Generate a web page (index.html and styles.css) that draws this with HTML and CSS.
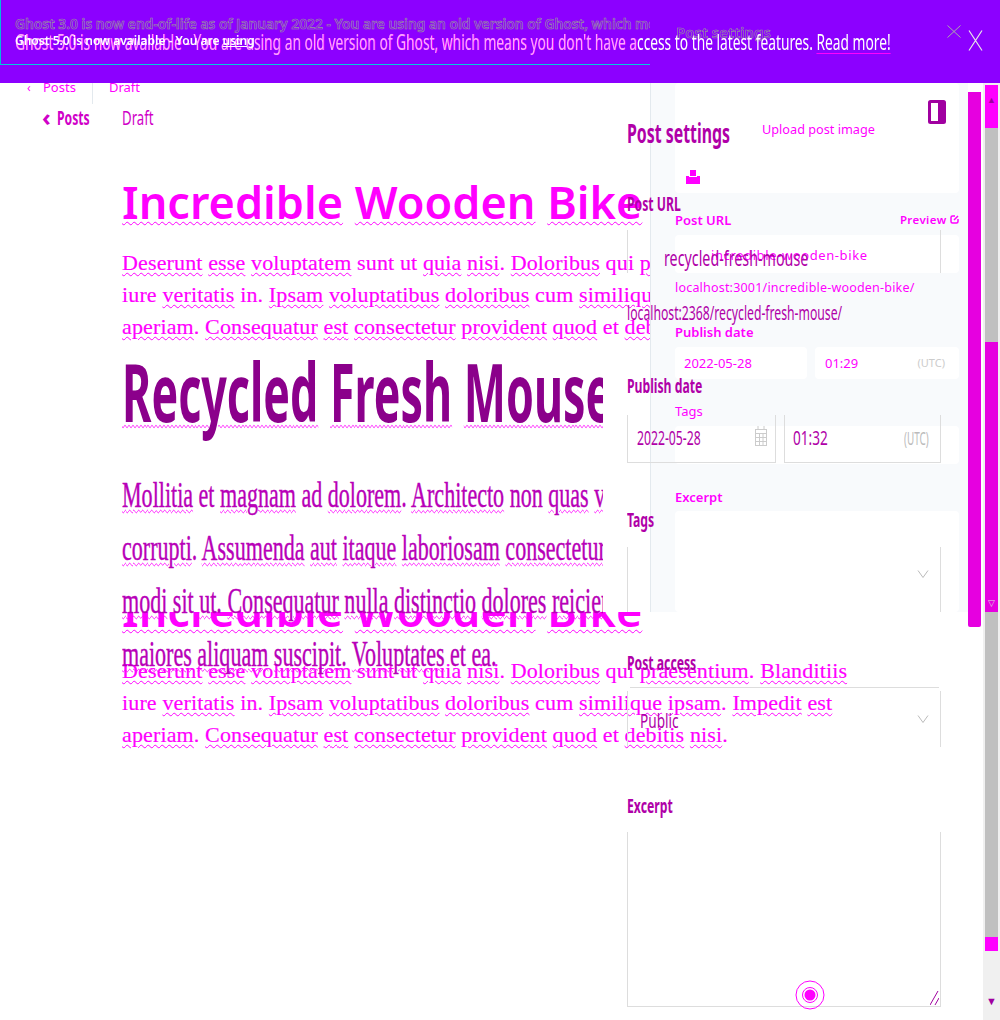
FILE: index.html
```html
<!DOCTYPE html>
<html lang="en">
<head>
<meta charset="utf-8">
<title>Post settings</title>
<link rel="stylesheet" href="styles.css">
</head>
<body>
<div class="canvas">

<!-- older page, sits under everything -->
<div class="old-article top-copy">
  <h1 class="old-title"><span class="sp">Incredible</span> <span class="sp">Wooden</span> <span class="sp">Bike</span></h1>
  <p class="old-line"><span class="sp">Deserunt</span> <span class="sp">esse</span> <span class="sp">voluptatem</span> sunt ut <span class="sp">quia</span> <span class="sp">nisi</span>. <span class="sp">Doloribus</span> qui <span class="sp">praesentium</span>. <span class="sp">Blanditiis</span></p>
  <p class="old-line">iure <span class="sp">veritatis</span> in. <span class="sp">Ipsam</span> <span class="sp">voluptatibus</span> <span class="sp">doloribus</span> cum <span class="sp">similique</span> <span class="sp">ipsam</span>. <span class="sp">Impedit</span> <span class="sp">est</span></p>
  <p class="old-line"><span class="sp">aperiam</span>. <span class="sp">Consequatur</span> <span class="sp">est</span> <span class="sp">consectetur</span> <span class="sp">provident</span> <span class="sp">quod</span> et <span class="sp">debitis</span> <span class="sp">nisi</span>.</p>
</div>

<div class="old-top">
  <span class="old-back">&#8249;</span><span class="old-crumb">Posts</span><span class="old-sep"></span><span class="old-crumb">Draft</span>
</div>

<aside class="old-panel">
  <div class="old-image">
    <span class="old-upload">Upload post image</span>
    <svg class="old-upload-icon" width="14" height="14" viewBox="0 0 14 14"><path d="M4 0h6v6h4v8H0V6h4z" fill="#f0f"/><path d="M3 6h8v1H3z" fill="#fff"/></svg>
  </div>
  <div class="old-labelrow"><span class="old-label">Post URL</span><span class="old-preview">Preview <svg width="9" height="9" viewBox="0 0 9 9" fill="none" stroke="#f0f" stroke-width="1.5"><path d="M5 1H2.5A1.5 1.5 0 0 0 1 2.5v4A1.5 1.5 0 0 0 2.5 8h4A1.5 1.5 0 0 0 8 6.5V4M4 5l4-4"/></svg></span></div>
  <div class="old-input url-input">incredible-wooden-bike</div>
  <div class="old-hint">localhost:3001/incredible-wooden-bike/</div>
  <div class="old-label date-label">Publish date</div>
  <div class="old-dates">
    <div class="old-input date-box">2022-05-28</div>
    <div class="old-input time-box">01:29<span class="old-utc">(UTC)</span></div>
  </div>
  <div class="old-label tags-label">Tags</div>
  <div class="old-input tags-box"></div>
  <div class="old-label excerpt-label">Excerpt</div>
  <div class="old-input excerpt-box"></div>
</aside>

<div class="old-article low-copy">
  <h1 class="old-title"><span class="sp">Incredible</span> <span class="sp">Wooden</span> <span class="sp">Bike</span></h1>
  <p class="old-line"><span class="sp">Deserunt</span> <span class="sp">esse</span> <span class="sp">voluptatem</span> sunt ut <span class="sp">quia</span> <span class="sp">nisi</span>. <span class="sp">Doloribus</span> qui <span class="sp">praesentium</span>. <span class="sp">Blanditiis</span></p>
  <p class="old-line">iure <span class="sp">veritatis</span> in. <span class="sp">Ipsam</span> <span class="sp">voluptatibus</span> <span class="sp">doloribus</span> cum <span class="sp">similique</span> <span class="sp">ipsam</span>. <span class="sp">Impedit</span> <span class="sp">est</span></p>
  <p class="old-line"><span class="sp">aperiam</span>. <span class="sp">Consequatur</span> <span class="sp">est</span> <span class="sp">consectetur</span> <span class="sp">provident</span> <span class="sp">quod</span> et <span class="sp">debitis</span> <span class="sp">nisi</span>.</p>
</div>

<!-- newer page -->
<div class="new-top">
  <span class="new-back">&#8249;</span><span class="narrow bold">Posts</span><span class="narrow draft">Draft</span>
</div>

<div class="new-article">
  <h1 class="new-title"><span class="sp">Recycled</span> <span class="sp">Fresh</span> <span class="sp">Mouse</span></h1>
  <p class="new-line"><span class="sp">Mollitia</span> et <span class="sp">magnam</span> ad <span class="sp">dolorem</span>. <span class="sp">Architecto</span> non <span class="sp">quas</span> <span class="sp">voluptatem</span></p>
  <p class="new-line"><span class="sp">corrupti</span>. <span class="sp">Assumenda</span> <span class="sp">aut</span> <span class="sp">itaque</span> <span class="sp">laboriosam</span> <span class="sp">consectetur</span></p>
  <p class="new-line"><span class="sp">modi</span> sit <span class="sp">ut</span>. <span class="sp">Consequatur</span> <span class="sp">nulla</span> <span class="sp">distinctio</span> <span class="sp">dolores</span> <span class="sp">reiciendis</span></p>
  <p class="new-line"><span class="sp">maiores</span> <span class="sp">aliquam</span> <span class="sp">suscipit</span>. <span class="sp">Voluptates</span> et ea.</p>
</div>

<aside class="new-panel">
  <div class="new-heading"><span class="narrow bold">Post settings</span></div>
  <div class="new-label url-l"><span class="narrow bold">Post URL</span></div>
  <div class="new-input url-f"><span class="narrow looser">recycled-fresh-mouse</span></div>
  <div class="new-hint"><span class="narrow">localhost:2368/recycled-fresh-mouse/</span></div>
  <div class="new-label date-l"><span class="narrow bold">Publish date</span></div>
  <div class="new-dates">
    <div class="new-input date-f">
      <span class="narrow">2022-05-28</span>
      <svg width="14" height="20" viewBox="0 0 14 20" fill="none" stroke="#ccc"><path d="M1 3.5h12M1 7.5h12M1 11.5h12M1 15.5h12M1 19.5h12M1.5 3v17M5.5 7v13M9 7v13M12.5 3v17M4 0v3M10 0v3"/></svg>
    </div>
    <div class="new-input time-f">
      <span class="narrow looser">01:32</span><span class="narrow utc">(UTC)</span>
    </div>
  </div>
  <div class="new-label tags-l"><span class="narrow bold">Tags</span></div>
  <div class="new-input tags-f"><svg class="chev" width="12" height="8" viewBox="0 0 12 8" fill="none" stroke="#bbb"><path d="M1 .5l5 7 5-7"/></svg></div>
  <div class="new-label access-l"><span class="narrow bold">Post access</span></div>
  <div class="new-input access-f"><span class="narrow looser">Public</span><svg class="chev" width="12" height="8" viewBox="0 0 12 8" fill="none" stroke="#bbb"><path d="M1 .5l5 7 5-7"/></svg></div>
  <div class="new-label excerpt-l"><span class="narrow bold">Excerpt</span></div>
  <div class="new-input excerpt-f">
    <svg class="grip" width="9" height="14" viewBox="0 0 9 14" stroke="#a000a0" fill="none"><path d="M0 14L8 0M5 14l4-7"/></svg>
  </div>
</aside>

<svg class="target" width="30" height="30" viewBox="0 0 30 30" fill="none"><circle cx="15" cy="15" r="14" stroke="#f0f"/><circle cx="15" cy="15" r="7.5" stroke="#f0f"/><circle cx="15" cy="15" r="5.5" fill="#f0f"/></svg>

<svg class="toggle" width="18" height="24" viewBox="0 0 18 24"><rect x="1.5" y="1.5" width="15" height="21" rx="1" fill="#fff" stroke="#a000a0" stroke-width="3"/><rect x="10" y="1" width="7" height="22" fill="#a000a0"/></svg>

<header class="banner">
  <div class="old-bar">
    <span class="old-notice">Ghost 3.0 is now end-of-life as of January 2022 - You are using an old version of Ghost, which means you don't have access</span>
    <span class="old-settings">Post settings</span>
  </div>
  <div class="new-bar">
    <span class="fringe">Ghost 5.0 is now available - You are using an old version of Ghost, which means you don't have a</span><span>ccess to the latest features. </span><a class="more">Read more!</a>
  </div>
  <div class="small-notice">Ghost 5.0 is now available - You are <u>using</u></div>
  <svg class="old-x" width="14" height="13" viewBox="0 0 14 13" fill="none" stroke="#aaa"><path d="M.5.5l13 12M13.5.5l-13 12"/></svg>
  <svg class="new-x" width="15" height="21" viewBox="0 0 15 21" fill="none" stroke="#e8e8e8" stroke-width="1.2"><path d="M1 .5l13 20M14 .5L1 20.5"/></svg>
</header>

<div class="inner-bar"></div>
<div class="page-bar">
  <div class="pb-up">&#9650;</div>
  <div class="pb-grey one"></div>
  <div class="pb-fill"><span>&#9661;</span></div>
  <div class="pb-grey two"></div>
  <div class="pb-tick"></div>
  <div class="pb-down">&#9660;</div>
</div>

</div>
</body>
</html>
```

FILE: styles.css
```css
html, body { margin: 0; padding: 0; background: #fff; }
.canvas { position: relative; width: 1000px; height: 1020px; overflow: hidden; font-family: "Noto Sans", sans-serif; color: #f0f; }

.sp { text-decoration: underline wavy #f0f 1px; text-underline-offset: 2px; }

/* narrow text, the new page's font is much tighter than anything installed */
.narrow { display: inline-block; transform: scaleX(.61); transform-origin: left center; white-space: nowrap; }
.narrow.looser { transform: scaleX(.68); }
.bold { font-weight: 700; }

/* banner */
.banner { position: absolute; left: 0; top: 0; width: 1000px; height: 83px; background: #8c00ff; color: #fff; overflow: hidden; }
.old-bar { position: absolute; left: 0; top: 0; width: 650px; height: 65px; border-left: 1px solid #0bd; border-bottom: 1px solid #0cd; box-sizing: border-box; overflow: hidden; white-space: nowrap; }
.old-notice { position: absolute; left: 14px; top: 14px; font-size: 13.8px; font-weight: 600; color: #8c00ff; -webkit-text-stroke: .6px #999; }
.old-settings { position: fixed; left: 676px; top: 22px; font-size: 15px; font-weight: 600; color: #8c00ff; -webkit-text-stroke: .6px #999; }
.new-bar { position: absolute; left: 15px; top: 27px; font-size: 22px; line-height: 28px; white-space: nowrap; transform: scaleX(.626); transform-origin: left center; }
.fringe { color: #f6a8ff; text-shadow: 1px 0 #f0f; }
.more { text-decoration: underline #f0f 1px; text-underline-offset: 3px; color: #fff; }
.small-notice { position: absolute; left: 15px; top: 33px; font-size: 12px; font-weight: 600; line-height: 16px; color: #fff; white-space: nowrap; }
.old-x { position: absolute; left: 947px; top: 25px; }
.new-x { position: absolute; left: 968px; top: 30px; }

/* older page */
.old-article { position: absolute; left: 122px; overflow: hidden; white-space: nowrap; }
.top-copy { top: 171px; width: 528px; }
.low-copy { top: 579px; width: 760px; clip-path: inset(33px 0 0 0); }
.old-title { margin: 0 0 14px; font-size: 45px; line-height: 62px; font-weight: 600; }
.old-line { margin: 0; font-family: "Liberation Serif", serif; font-size: 22px; line-height: 32px; letter-spacing: .14px; -webkit-text-stroke: .2px #f0f; }

.old-top { position: absolute; left: 27px; top: 72px; height: 30px; display: flex; align-items: center; font-size: 13px; }
.old-back { width: 16px; font-size: 12px; }
.old-sep { width: 1px; height: 34px; background: #e3e9ee; margin: 0 16px; }

.old-panel { position: absolute; left: 650px; top: 83px; width: 318px; height: 529px; box-sizing: border-box; padding-left: 24px; padding-right: 9px; background: #f8fafc; border-left: 1px solid #e3e9ee; overflow: hidden; font-size: 13px; }
.old-image { position: relative; height: 110px; background: #fff; border-radius: 4px; }
.old-upload { position: absolute; left: 87px; top: 37px; font-size: 12.7px; }
.old-upload-icon { position: absolute; left: 11px; top: 87px; }
.old-labelrow { display: flex; justify-content: space-between; margin-top: 18px; }
.old-label { font-weight: 600; line-height: 18px; }
.old-preview { font-size: 11.5px; font-weight: 600; letter-spacing: .4px; margin-top: 1px; }
.old-input { background: #fff; border-radius: 4px; box-sizing: border-box; }
.url-input { height: 38px; margin-top: 6px; padding: 11px 0 0 36px; line-height: 18px; letter-spacing: .6px; }
.old-hint { margin-top: 6px; line-height: 18px; font-size: 12.5px; letter-spacing: .2px; }
.date-label { margin-top: 26px; }
.old-dates { display: flex; gap: 8px; margin-top: 6px; }
.date-box { width: 132px; height: 32px; padding: 7px 0 0 9px; line-height: 18px; }
.time-box { width: 144px; height: 32px; padding: 7px 14px 0 10px; line-height: 18px; display: flex; justify-content: space-between; }
.old-utc { color: #ccc; font-size: 11px; }
.tags-label { margin-top: 23px; font-weight: 400; }
.tags-box { height: 38px; margin-top: 6px; }
.excerpt-label { margin-top: 24px; }
.excerpt-box { height: 101px; margin-top: 5px; }

/* newer page */
.new-top { position: absolute; left: 42px; top: 103px; height: 28px; display: flex; align-items: center; font-size: 20px; color: #d000c8; }
.new-back { width: 15px; font-size: 24px; line-height: 24px; font-weight: 700; }
.new-top .draft { margin-left: 11px; transform: scaleX(.66); }

.new-article { position: absolute; left: 122px; top: 347px; width: 481px; overflow: hidden; white-space: nowrap; color: #b800b8; }
.new-title { margin: -1px 0 33px; font-size: 80px; line-height: 90px; font-weight: 700; color: #8b008b; transform: scaleX(.56); transform-origin: left center; width: 1000px; }
.new-line { margin: 0; font-family: "Liberation Serif", serif; font-size: 35px; line-height: 53px; transform: scaleX(.63); transform-origin: left center; width: 1000px; -webkit-text-stroke: .4px #b800b8; }

.new-panel { position: absolute; left: 627px; top: 83px; width: 314px; height: 924px; color: #b000a8; font-size: 20px; }
.new-heading { margin-top: 33px; font-size: 26px; line-height: 34px; }
.new-label { line-height: 26px; }
.url-l { margin-top: 41px; }
.new-input { box-sizing: border-box; position: relative; border-left: 1px solid #ddd; border-right: 1px solid #ddd; }
.url-f { height: 43px; margin-top: 13px; padding: 15px 0 0 36px; line-height: 26px; font-size: 21px; }
.new-hint { margin-top: 27px; line-height: 26px; }
.date-l { margin-top: 47px; }
.new-dates { display: flex; gap: 8px; margin-top: 16px; }
.date-f { width: 149px; height: 48px; padding-top: 9px; padding-left: 9px; line-height: 28px; border-bottom: 1px solid #ddd; }
.date-f svg { position: absolute; right: 7px; top: 11px; }
.time-f { width: 157px; height: 48px; padding: 9px 0 0 8px; line-height: 28px; border-bottom: 1px solid #ddd; }
.time-f .utc { position: absolute; left: 119px; top: 9px; color: #bbb; font-size: 18px; transform: scaleX(.55); }
.tags-l { margin-top: 44px; }
.tags-f { height: 65px; margin-top: 14px; }
.chev { position: absolute; right: 11px; top: 23px; }
.access-l { margin-top: 38px; }
.access-f { height: 56px; margin-top: 15px; padding: 16px 0 0 12px; line-height: 28px; }
.access-f::before { content: ""; position: absolute; left: 2px; right: 1px; top: -4px; border-top: 1px solid #ddd; }
.access-f .chev { top: 24px; }
.excerpt-l { margin-top: 46px; }
.excerpt-f { height: 175px; margin-top: 13px; border-bottom: 1px solid #ddd; }
.grip { position: absolute; right: 1px; bottom: 1px; }
.target { position: absolute; left: 795px; top: 980px; }
.toggle { position: absolute; left: 928px; top: 100px; }

/* scrollbars */
.inner-bar { position: absolute; left: 968px; top: 92px; width: 13px; height: 535px; background: #e600e0; border-radius: 0 0 2px 2px; }
.page-bar { position: absolute; left: 983px; top: 83px; width: 17px; height: 937px; background: #f0f0f0; display: flex; flex-direction: column; align-items: center; font-size: 9px; }
.pb-up { width: 13px; height: 43px; margin-top: 2px; background: #f0f; color: #a000a0; text-align: center; line-height: 30px; }
.pb-grey { width: 13px; background: #c0c0c0; }
.pb-grey.one { height: 214px; }
.pb-fill { width: 13px; height: 270px; background: #e600e0; position: relative; color: #ddd; text-align: center; }
.pb-fill span { position: absolute; left: 0; right: 0; bottom: 3px; }
.pb-grey.two { height: 325px; }
.pb-tick { width: 13px; height: 14px; background: #f0f; }
.pb-down { margin-top: 42px; color: #a000a0; font-size: 11px; }
```
